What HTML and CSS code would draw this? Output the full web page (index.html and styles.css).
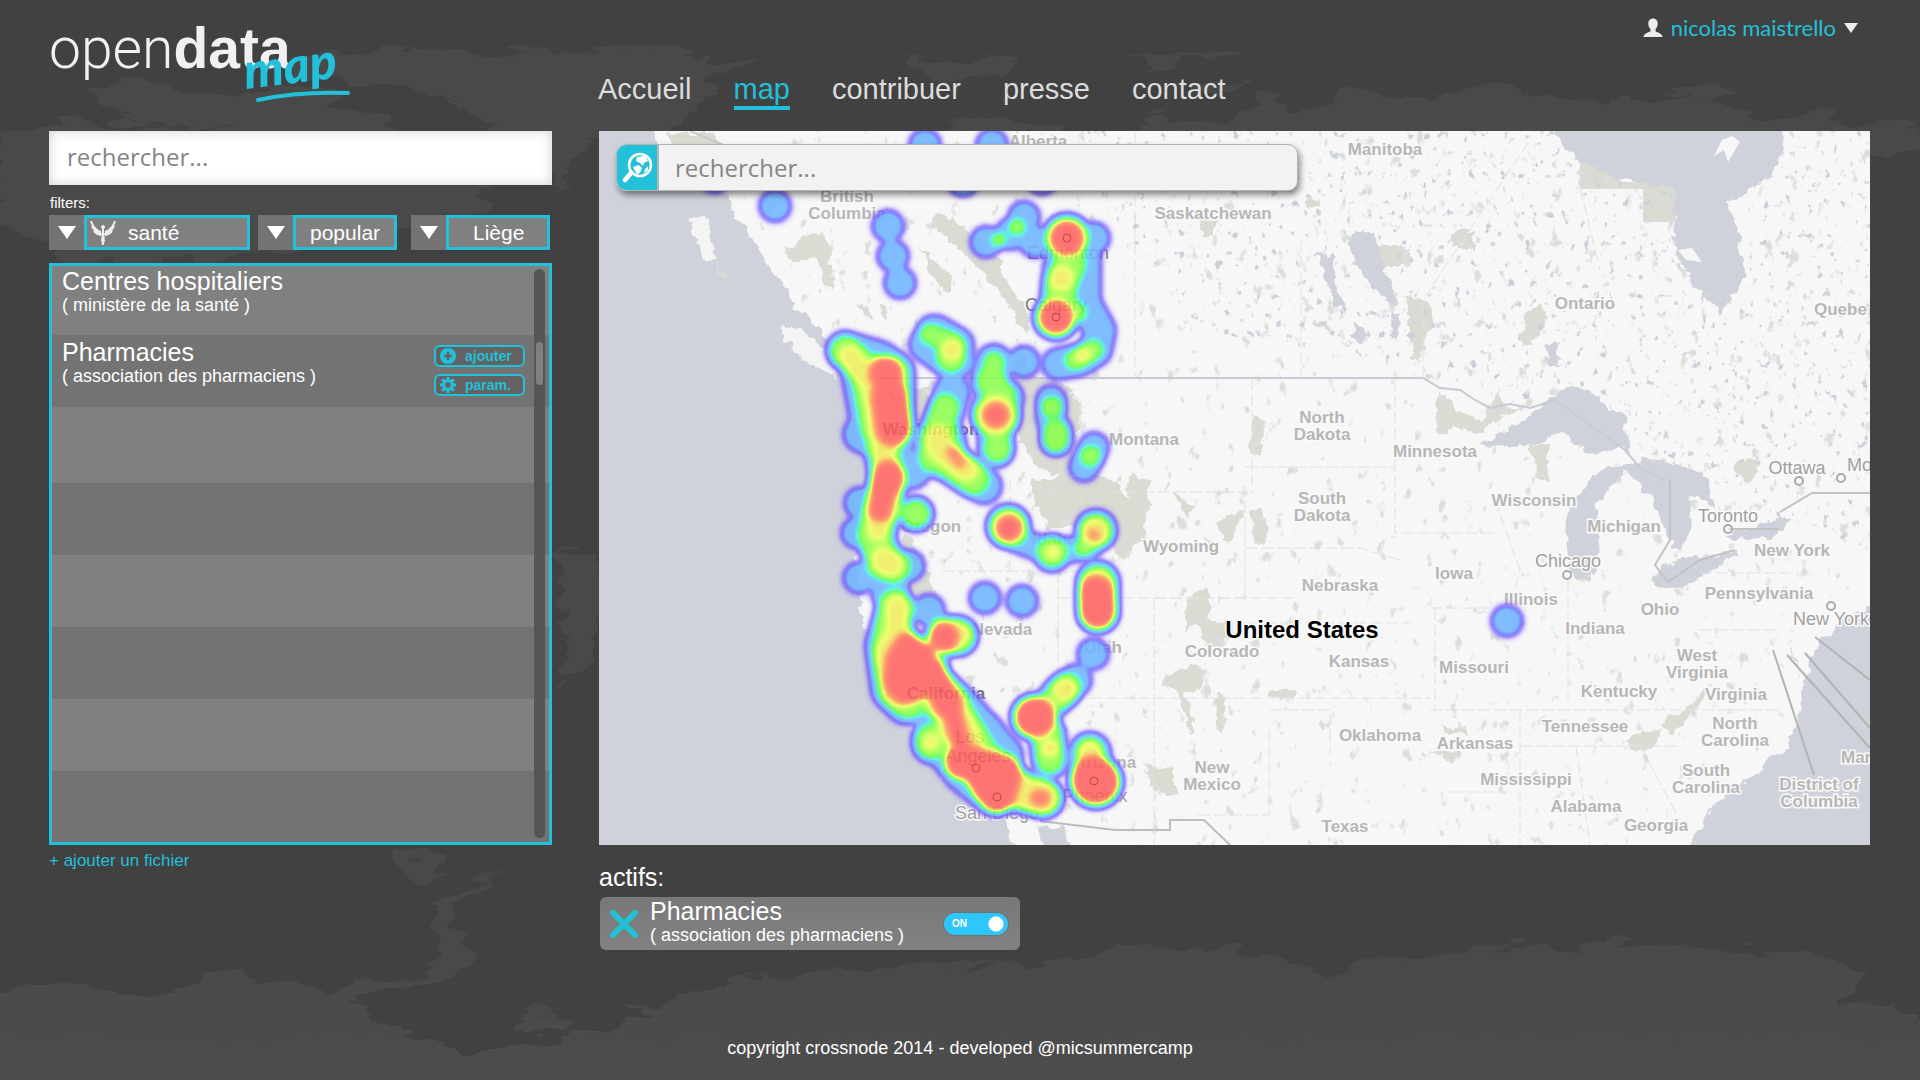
FILE: index.html
```html
<!DOCTYPE html>
<html lang="fr">
<head>
<meta charset="utf-8">
<title>opendata map</title>
<link rel="stylesheet" href="styles.css">
</head>
<body>
<svg class="backdrop" viewBox="0 0 1920 1080" preserveAspectRatio="xMidYMid slice" aria-hidden="true">
  <defs>
    <filter id="rough" x="0" y="0" width="1" height="1">
      <feTurbulence type="fractalNoise" baseFrequency="0.02 0.06" numOctaves="4" seed="4" result="n"/>
      <feDisplacementMap in="SourceGraphic" in2="n" scale="34" xChannelSelector="R" yChannelSelector="G"/>
    </filter>
    <linearGradient id="south" x1="0" y1="0" x2="0" y2="1"><stop offset="0" stop-color="#474747"/><stop offset="1" stop-color="#4e4e4e"/></linearGradient>
  </defs>
  <rect width="1920" height="1080" fill="#414141"/>
  <g filter="url(#rough)" fill="#484848">
    <path d="M290 62L400 48L520 52L640 46L700 58L765 55L715 75L700 105L660 135L590 145L560 185L520 165L470 105L400 87L310 83Z"/>
    <path d="M90 97L140 80L210 93L280 83L330 100L380 115L440 155L400 140L330 135L270 145L200 130L130 120Z"/>
    <path d="M0 130L80 118L180 130L330 150L480 180L500 205L400 225L300 250L90 270L40 240L0 225Z"/>
    <path d="M905 65L970 57L1020 63L1000 77L940 83ZM1130 60L1240 53L1230 61L1150 67ZM1190 85L1255 79L1230 97Z"/>
    <path d="M930 135L970 117L1050 123L1090 140ZM1150 115L1210 125L1260 101L1300 110L1350 89L1430 95L1510 81L1610 105L1700 95L1750 117L1810 117L1930 130L1930 155L1130 155Z"/>
    <path d="M1660 89L1720 87L1745 91L1710 97Z"/>
    <path d="M560 548L598 560L604 600L586 670L560 685ZM388 850L438 850L438 873L450 879L428 885L403 873Z"/>
  </g>
  <g filter="url(#rough)" fill="url(#south)">
    <path d="M-20 990L70 985L160 992L230 976L330 986L425 975L440 945L430 905L470 880L505 868L450 910L470 945L465 970L420 990L350 1000L380 1024L470 1052L560 1036L660 1018L630 1010L680 996L770 972L900 966L1080 960L1150 944L1230 950L1330 970L1480 948L1640 944L1800 954L1870 975L1840 1000L1940 1020L1940 1100L-20 1100Z"/>
    <path d="M515 1025L540 1010L570 1016L565 1030Z"/>
  </g>
</svg>

<header class="top">
  <a class="logo" href="#" aria-label="opendata map"><span class="logo-open">open</span><span class="logo-data">data</span>
    <svg class="logo-map" viewBox="0 0 120 60" aria-hidden="true">
      <text class="logo-script" x="6" y="43" transform="rotate(-7 6 43)">map</text>
      <path d="M18 54C50 47 78 46 108 47" fill="none" stroke="#22c0d9" stroke-width="4" stroke-linecap="round"/>
    </svg>
  </a>
  <nav class="menu">
    <a href="#">Accueil</a>
    <a href="#" class="current" aria-current="page">map</a>
    <a href="#">contribuer</a>
    <a href="#">presse</a>
    <a href="#">contact</a>
  </nav>
  <button class="user" type="button">
    <svg width="20" height="20" viewBox="0 0 20 20"><path fill="#eee" d="M10 0.500C6.800 0.500 5.200 2.800 5.300 5.800C5.400 8.300 6.200 9.800 7.400 11V13.200C6.500 14.300 1 14.800 0.400 19H19.600C19 14.800 13.500 14.300 12.600 13.200V11C13.800 9.800 14.600 8.300 14.700 5.800C14.800 2.800 13.200 0.500 10 0.500Z"/></svg>
    <span>nicolas maistrello</span>
    <svg width="14" height="10" viewBox="0 0 14 10"><path fill="#eee" d="M0 0H14L7 10Z"/></svg>
  </button>
</header>

<main class="board">
  <section class="side">
    <input class="search" type="search" placeholder="rechercher..." aria-label="rechercher un jeu de données">
    <h2 class="filters-title">filters:</h2>
    <div class="filters">
      <label class="filter wide">
        <span class="arrow"><svg width="18" height="13" viewBox="0 0 18 13"><path fill="#fff" d="M0 0H18L9 13Z"/></svg></span>
        <svg class="caduceus" width="26" height="26" viewBox="0 0 26 26" fill="none" stroke="#eee"><path d="M13 6V25" stroke-width="2"/><circle cx="13" cy="7" r="1.500" fill="#eee"/><path d="M11 12C8 11 3 8 1 1M11 13.500C8 13 4 11 2 6M11 15C8 15 6 13.500 4 11M15 12C18 11 23 8 25 1M15 13.500C18 13 22 11 24 6M15 15C18 15 20 13.500 22 11" stroke-width="2"/><path d="M13 13C9 15 17 17 13 19S15.500 22 13 24M13 13C17 15 9 17 13 19S10.500 22 13 24" stroke-width="1.600"/></svg>
        <select aria-label="catégorie"><option>santé</option></select>
      </label>
      <label class="filter">
        <span class="arrow"><svg width="18" height="13" viewBox="0 0 18 13"><path fill="#fff" d="M0 0H18L9 13Z"/></svg></span>
        <select aria-label="tri"><option>popular</option></select>
      </label>
      <label class="filter last">
        <span class="arrow"><svg width="18" height="13" viewBox="0 0 18 13"><path fill="#fff" d="M0 0H18L9 13Z"/></svg></span>
        <select aria-label="ville"><option>Liège</option></select>
      </label>
    </div>
    <div class="list">
      <ul>
        <li class="first"><div><h3>Centres hospitaliers</h3><p>( ministère de la santé )</p></div></li>
        <li><div><h3>Pharmacies</h3><p>( association des pharmaciens )</p></div>
          <div class="actions">
            <button type="button"><svg width="16" height="16" viewBox="0 0 16 16"><circle cx="8" cy="8" r="8" fill="#22c0d9"/><path d="M8 4V12M4 8H12" stroke="#636363" stroke-width="2.400"/></svg>ajouter</button>
            <button type="button"><svg width="16" height="16" viewBox="0 0 16 16"><circle cx="8" cy="8" r="4.400" fill="none" stroke="#22c0d9" stroke-width="3.200"/><path d="M8 0V3M8 13V16M0 8H3M13 8H16M2.300 2.300L4.500 4.500M11.500 11.500L13.700 13.700M13.700 2.300L11.500 4.500M4.500 11.500L2.300 13.700" stroke="#22c0d9" stroke-width="3"/></svg>param.</button>
          </div>
        </li>
        <li class="tall"></li><li></li><li></li><li></li><li></li><li class="rest"></li>
      </ul>
      <div class="track"><div class="thumb"></div></div>
    </div>
  </section>

  <section class="map" aria-label="carte">
    <svg class="map-canvas" viewBox="599 131 1271 714" preserveAspectRatio="xMidYMid slice">
      <defs>
        <filter id="coast" x="-5%" y="-5%" width="110%" height="110%">
          <feTurbulence type="fractalNoise" baseFrequency="0.090" numOctaves="3" seed="2" result="n"/>
          <feDisplacementMap in="SourceGraphic" in2="n" scale="12" xChannelSelector="R" yChannelSelector="G"/>
        </filter>
        <filter id="lakes" x="0" y="0" width="1" height="1" color-interpolation-filters="sRGB">
          <feTurbulence type="fractalNoise" baseFrequency="0.130 0.100" numOctaves="4" seed="11"/>
          <feColorMatrix values="0 0 0 0 0.790  0 0 0 0 0.810  0 0 0 0 0.850  8 0 0 0 -5.300"/>
          <feComposite in2="SourceAlpha" operator="in"/>
        </filter>
        <filter id="streams" x="0" y="0" width="1" height="1" color-interpolation-filters="sRGB">
          <feTurbulence type="fractalNoise" baseFrequency="0.080 0.060" numOctaves="3" seed="29"/>
          <feColorMatrix values="0 0 0 0 0.860  0 0 0 0 0.870  0 0 0 0 0.860  8 0 0 0 -5.300"/>
          <feComposite in2="SourceAlpha" operator="in"/>
        </filter>
        <filter id="heat" filterUnits="userSpaceOnUse" x="599" y="131" width="1271" height="714" color-interpolation-filters="sRGB">
          <feGaussianBlur stdDeviation="3.800"/>
          <feColorMatrix values="0 0 0 1 0  0 0 0 1 0  0 0 0 1 0  0 0 0 1 0"/>
          <feComponentTransfer>
            <feFuncR type="table" tableValues="0.500 0.440 0.400 0.440 0.440 0.280 0.360 0.620 0.930 1 1"/>
            <feFuncG type="table" tableValues="0.400 0.310 0.400 0.700 0.720 0.950 1 1 1 0.560 0.360"/>
            <feFuncB type="table" tableValues="1 1 1 1 1 0.900 0.300 0.280 0.340 0.330 0.360"/>
            <feFuncA type="table" tableValues="0 0.600 0.820 0.900 0.880 0.850 0.850 0.850 0.850 0.850 0.850"/>
          </feComponentTransfer>
        </filter>
      </defs>
      <rect x="599" y="131" width="1271" height="714" fill="#cfd2db"/>
      <path filter="url(#coast)" fill="#f7f7f7" d="M650 120L660 150L700 185L728 195L735 218L750 232L762 255L778 278L790 292L794 308L812 322L828 338L838 365L850 385L851 395L860 432L867 455L866 490L857 530L857 560L862 590L860 612L864 626L874 640L880 670L884 692L900 712L918 740L930 757L947 780L967 797L992 812L1006 822L1014 845L1024 860L1046 860L1040 824L1062 828L1078 860H1690L1692 840L1704 817L1724 797L1748 777L1768 762L1788 746L1798 722L1803 690L1810 665L1817 642L1832 634L1842 618L1885 604V120Z"/>
      <g filter="url(#coast)" fill="#f4f4f4">
        <path d="M688 217L708 218L712 240L718 262L707 262L698 245Z"/>
        <path d="M779 325L800 328L826 352L838 378L815 368L792 348Z"/>
        <path fill="#dadcd4" d="M716 262L728 280L722 278ZM665 133L715 133L722 180L690 172Z"/>
      </g>
      <g filter="url(#coast)" fill="#dadcd4">
        <path d="M787 250L805 236L822 232L830 245L834 290L826 288L816 255L800 262L788 262Z"/>
        <path d="M930 222L942 214L962 225L985 250L1000 262L1012 290L1028 310L1030 335L1018 325L1008 300L990 282L960 250Z"/>
        <path d="M918 245L930 258L950 275L950 290L940 290L928 265ZM858 302L872 308L874 322L862 316ZM878 306L886 306L884 320Z"/>
        <path d="M1018 345L1030 375L1062 380L1082 405L1076 440L1070 480L1040 470L1020 440L1012 400Z"/>
        <path d="M1030 480L1100 475L1128 495L1140 540L1122 560L1095 520L1050 530L1036 505ZM900 382L930 390L925 440L905 430Z"/>
        <path d="M905 530L920 560L938 600L930 610L905 585ZM1128 475L1150 480L1145 540L1132 535Z"/>
        <path d="M1218 520L1245 510L1230 545L1222 540ZM1250 508L1262 512L1270 530L1262 548L1254 542ZM1175 492L1192 510L1190 520L1178 505Z"/>
        <path d="M1185 600L1206 588L1212 620L1228 625L1222 650L1206 645L1196 625L1186 630ZM1160 680L1192 665L1205 670L1200 690L1185 692L1195 730L1190 735L1182 698ZM1145 765L1172 770L1178 795L1155 790ZM1215 690L1226 700L1222 735L1216 725Z"/>
        <path d="M1370 246H1410V266H1378ZM1405 295L1425 300L1435 318L1428 330L1420 360L1412 355ZM1452 232L1475 232L1474 248L1455 246Z"/>
        <path d="M1530 310L1540 302L1548 318L1530 345L1518 342ZM1438 392L1450 400L1456 412L1480 420L1500 388L1502 405L1520 410L1490 425L1480 435L1455 425L1448 438L1435 430Z"/>
        <path d="M1252 415L1266 420L1260 455L1250 453ZM1310 320L1330 322L1335 332ZM1528 446L1550 444L1548 480L1540 480Z"/>
        <path d="M1625 745L1640 732L1660 730L1655 748L1635 752ZM1660 724L1690 704L1713 682L1700 705L1670 735ZM1430 750L1462 752L1450 760ZM1442 725L1465 728L1468 734L1446 733Z"/>
        <path d="M1270 690L1296 692L1296 700L1270 698ZM1734 460L1762 462L1750 482L1736 474ZM1200 220H1214V236H1202ZM1306 197L1325 202L1308 208Z"/>
      </g>
      <path fill="#dadcd4" d="M1580 158L1610 172L1622 182H1676V222H1643V189H1580Z"/>
      <path filter="url(#lakes)" d="M1060 131H1560L1670 190L1720 320L1770 190L1800 131H1870V560L1640 450L1440 375L1200 330L1130 240Z"/>
      <path filter="url(#streams)" d="M1025 131H1870V590L1800 650L1780 740L1680 845H1080L900 700L870 420L740 200L800 131Z"/>
      <g filter="url(#coast)" fill="#cfd2db">
        <path d="M1548 120L1562 145L1577 158L1602 171L1622 181L1652 186L1676 186L1674 218L1676 255L1692 282L1707 299L1720 316L1732 297L1740 292L1745 277L1738 232L1730 212L1727 202L1748 192L1768 177L1781 157L1786 120Z"/>
        <path d="M1347 242L1357 230L1374 234L1382 257L1390 282L1399 305L1388 302L1372 287L1357 267ZM1318 250L1332 258L1336 285L1347 312L1338 308L1326 285ZM1355 322L1368 335L1364 344L1354 338ZM1396 305L1401 325L1394 342L1389 335Z"/>
        <path d="M1480 447L1502 431L1528 417L1548 402L1560 387L1582 387L1599 397L1607 410L1624 414L1627 437L1631 453L1617 447L1602 450L1587 453L1572 442L1564 432L1554 434L1540 444L1512 446ZM1545 345L1556 342L1560 365L1550 368Z"/>
        <path d="M1567 548L1565 522L1572 502L1587 482L1607 467L1629 467L1612 484L1602 494L1597 512L1599 545L1594 570L1588 580L1575 580Z"/>
        <path d="M1622 465L1652 460L1692 467L1707 482L1714 508L1700 497L1687 492L1693 520L1686 545L1672 547L1662 522L1652 500Z"/>
        <path d="M1652 580L1662 567L1682 557L1702 557L1735 550L1738 555L1712 570L1687 585L1667 589ZM1724 535L1742 530L1767 522L1790 516L1787 530L1767 537L1737 540Z"/>
        <path d="M1787 637L1794 660L1800 685L1796 660ZM1640 458L1660 462L1680 470L1650 470Z"/>
      </g>
      <path fill="#f7f7f7" d="M1714 156L1722 140L1732 136L1740 142L1734 152L1728 162L1724 150ZM1678 250L1692 248L1702 262L1686 260ZM1838 610L1870 598V603L1845 614Z"/>
      <g fill="none" stroke="#c8cad4" stroke-width="2">
        <path d="M882 378H1423L1440 388L1460 390L1475 400L1490 408L1510 404L1530 408L1555 400L1625 450L1640 468L1665 480"/>
        <path d="M1040 821L1115 830H1170V820H1204L1230 845" stroke="#bcbcc4"/>
        <path d="M1780 512L1812 493H1870M1728 529H1778M1670 480V540L1655 565L1668 582L1700 560L1735 550" stroke="#c2c2c2"/>
        <path d="M1773 650L1814 775M1787 655L1870 748M1805 653L1870 728M1815 637L1870 680" stroke="#b4b2b2"/>
        <path d="M690 131L740 152" stroke="#c9c9c9"/>
      </g>
      <g fill="none" stroke="#dfe1e1" stroke-width="1" stroke-dasharray="12 4">
        <path d="M1135 131V378M1301 240V378M1423 378V300L1530 140M1580 188L1600 270"/>
        <path d="M1252 378V493M1110 492H1245V598H1060M1245 467H1395M1395 380V533H1495M942 571H1110M1058 571V698M1058 698H1430M1154 598V845M1010 480V571M1245 548H1360L1400 560M1154 598H1300M1290 623H1410M1200 623H1290M1430 608H1500M1495 500L1520 570L1510 610M1568 580V700M1435 608V710M1270 710H1330V755M1269 730V815H1195M1430 710H1780M1520 746H1680M1520 710V845M1450 792H1500M1700 573H1790M1700 630H1780M1576 746L1590 845M1640 746L1680 820"/>
      </g>
      <g class="states">
        <text x="1038" y="147">Alberta</text><text x="1385" y="155">Manitoba</text>
        <text x="847" y="202">British</text><text x="847" y="219">Columbia</text><text x="1213" y="219">Saskatchewan</text>
        <text x="1585" y="309">Ontario</text><text class="cut" x="1814" y="315">Quebe</text>
        <text class="shaded" x="931" y="435">Washington</text><text x="1144" y="445">Montana</text>
        <text x="1322" y="423">North</text><text x="1322" y="440">Dakota</text><text x="1435" y="457">Minnesota</text>
        <text x="1322" y="504">South</text><text x="1322" y="521">Dakota</text><text x="1534" y="506">Wisconsin</text>
        <text x="1624" y="532">Michigan</text><text x="1792" y="556">New York</text><text x="1181" y="552">Wyoming</text>
        <text x="931" y="532">Oregon</text><text x="1055" y="545">Idaho</text><text x="1454" y="579">Iowa</text>
        <text x="1340" y="591">Nebraska</text><text x="1531" y="605">Illinois</text><text x="1759" y="599">Pennsylvania</text>
        <text x="1660" y="615">Ohio</text><text x="1595" y="634">Indiana</text><text x="1002" y="635">Nevada</text><text x="1103" y="653">Utah</text>
        <text x="1222" y="657">Colorado</text><text x="1359" y="667">Kansas</text><text x="1474" y="673">Missouri</text>
        <text x="1697" y="661">West</text><text x="1697" y="678">Virginia</text><text x="1619" y="697">Kentucky</text><text x="1736" y="700">Virginia</text>
        <text class="shaded" x="946" y="699">California</text><text x="1585" y="732">Tennessee</text><text x="1735" y="729">North</text><text x="1735" y="746">Carolina</text>
        <text x="1380" y="741">Oklahoma</text><text x="1475" y="749">Arkansas</text><text x="1212" y="773">New</text><text x="1212" y="790">Mexico</text>
        <text x="1526" y="785">Mississippi</text><text x="1706" y="776">South</text><text x="1706" y="793">Carolina</text>
        <text class="cut" x="1841" y="763">Mar</text><text x="1819" y="790">District of</text><text x="1819" y="807">Columbia</text>
        <text x="1586" y="812">Alabama</text><text x="1656" y="831">Georgia</text><text x="1345" y="832">Texas</text><text x="1105" y="768">Arizona</text>
      </g>
      <g class="cities">
        <text class="shaded" x="1068" y="259">Edmonton</text><text class="shaded" x="1056" y="311">Calgary</text><text x="1797" y="474">Ottawa</text><text class="cut" x="1847" y="471">Mo</text>
        <text x="1728" y="522">Toronto</text><text x="1568" y="567">Chicago</text><text x="1831" y="625">New York</text>
        <text class="shaded" x="970" y="743">Los</text><text class="shaded" x="978" y="762">Angeles</text><text x="997" y="819">San Diego</text><text x="1095" y="802">Phoenix</text>
      </g>
      <text class="country" x="1302" y="638">United States</text>
      <g filter="url(#heat)" fill="#fff" stroke="#fff" stroke-linecap="round" stroke-linejoin="round" stroke-width="0">
        <g opacity="0.370">
          <circle cx="925" cy="145" r="15"/><circle cx="992" cy="145" r="15"/><circle cx="775" cy="206" r="15"/><circle cx="963" cy="181" r="15"/><circle cx="1042" cy="179" r="15"/><circle cx="715" cy="177" r="15"/>
          <circle cx="888" cy="226" r="15"/><circle cx="893" cy="256" r="15"/><circle cx="900" cy="283" r="15"/>
          <circle cx="1024" cy="217" r="15"/><circle cx="1011" cy="234" r="15"/><circle cx="986" cy="242" r="15"/><circle cx="1035" cy="242" r="15"/><circle cx="1094" cy="238" r="15"/>
          <circle cx="1067" cy="238" r="24"/><circle cx="1056" cy="317" r="22"/>
          <path fill="none" stroke-width="30" d="M1085 255V303L1100 330L1096 350L1080 360L1058 364"/>
          <path fill="none" stroke-width="36" d="M1066 250L1061 278L1058 315"/>
          <circle cx="1024" cy="362" r="15"/><circle cx="1507" cy="621" r="15"/>
          <path fill="none" stroke-width="30" d="M933 331L925 345M936 331L958 344V362L948 362L925 345"/>
          <path fill="none" stroke-width="34" d="M994 362L990 385L1006 398M996 415V450M952 392L940 430L936 452L984 486"/>
          <circle cx="996" cy="415" r="24"/>
          <path fill="none" stroke-width="28" d="M1051 400V418M1056 430V440M1094 447L1084 467"/>
          <path fill="none" stroke-width="36" d="M845 350L880 360L896 372V430L888 480L876 540L888 565M890 585V592M862 434L880 440M912 470H895"/>
          <path fill="none" stroke-width="58" d="M872 375L882 430"/>
          <circle cx="860" cy="503" r="15"/><circle cx="857" cy="533" r="15"/><circle cx="859" cy="578" r="15"/><circle cx="909" cy="566" r="15"/><circle cx="916" cy="514" r="17"/>
          <circle cx="1008" cy="526" r="21"/><circle cx="1096" cy="530" r="20"/>
          <path fill="none" stroke-width="24" d="M1018 540L1052 553L1090 546"/>
          <circle cx="1052" cy="553" r="18"/>
          <path fill="none" stroke-width="40" d="M1098 584L1098 612"/>
          <circle cx="985" cy="598" r="15"/><circle cx="1022" cy="601" r="15"/><circle cx="929" cy="610" r="15"/><circle cx="1093" cy="654" r="15"/><circle cx="988" cy="730" r="15"/><circle cx="1076" cy="680" r="15"/>
          <path fill="none" stroke-width="36" d="M896 608L884 645L890 690L905 705L950 705L980 755L990 790L1044 798M932 742V745M946 636L958 636M930 650V680L960 705L1004 755"/>
          <path fill="none" stroke-width="32" d="M930 735L962 775L990 797"/>
          <circle cx="1033" cy="717" r="22"/>
          <path fill="none" stroke-width="32" d="M1038 716L1066 688M1046 730L1050 762"/>
          <path fill="none" stroke-width="40" d="M1090 753L1094 782"/><circle cx="1096" cy="782" r="26"/>
        </g>
        <g opacity="0.470">
          <circle cx="1017" cy="227" r="9"/><circle cx="999" cy="240" r="8"/><circle cx="916" cy="514" r="15"/>
          <circle cx="1067" cy="238" r="22"/><circle cx="1056" cy="317" r="21"/>
          <path fill="none" stroke-width="32" d="M1068 245L1070 265L1061 285L1060 310"/>
          <path fill="none" stroke-width="22" d="M1060 312L1076 312M1075 360L1093 350M930 334L950 342M994 362L990 385L1006 394"/>
          <path fill="none" stroke-width="30" d="M951 346V358M945 408L938 425M990 380L994 384M996 416V418M1056 434V440"/>
          <path fill="none" stroke-width="48" d="M940 440L942 454"/>
          <path fill="none" stroke-width="36" d="M945 460L972 478"/>
          <circle cx="998" cy="448" r="15"/><circle cx="996" cy="415" r="24"/>
          <path fill="none" stroke-width="22" d="M1051 407H1053M1090 456H1091"/>
          <path fill="none" stroke-width="34" d="M846 352L870 375M892 372V425L882 448L888 480L874 535L882 562L894 566"/>
          <path fill="none" stroke-width="52" d="M878 380L886 425"/>
          <circle cx="1009" cy="527" r="20"/><circle cx="1096" cy="531" r="18"/><circle cx="1052" cy="552" r="16"/><circle cx="1084" cy="548" r="10"/>
          <path fill="none" stroke-width="38" d="M896 608L890 650L896 690L908 700M905 650L925 690L950 705L980 755L1000 775L1020 790L1044 798M946 636L958 636"/>
          <circle cx="931" cy="742" r="18"/>
          <path fill="none" stroke-width="40" d="M1098 582V612"/>
          <path fill="none" stroke-width="32" d="M1060 694L1066 688M1048 735L1050 758M1090 752V780"/>
          <circle cx="1035" cy="717" r="22"/><circle cx="1096" cy="781" r="25"/>
        </g>
        <g opacity="0.450">
          <circle cx="1067" cy="238" r="20"/><circle cx="1061" cy="278" r="14"/><circle cx="1056" cy="317" r="19"/><circle cx="952" cy="350" r="12"/><circle cx="1083" cy="355" r="9"/><circle cx="996" cy="415" r="20"/>
          <path fill="none" stroke-width="24" d="M850 356L872 385L884 440L884 480L878 530"/>
          <path fill="none" stroke-width="42" d="M884 376L888 430"/>
          <path fill="none" stroke-width="36" d="M889 478L882 510"/>
          <path fill="none" stroke-width="28" d="M884 560L890 564M938 438L940 448L966 468"/>
          <circle cx="1009" cy="528" r="18"/><circle cx="1095" cy="532" r="15"/><circle cx="1053" cy="552" r="8"/>
          <path fill="none" stroke-width="37" d="M1097 588V612M900 640L892 655L900 690M945 705L965 740M980 770L1000 780L1040 798M905 650L950 700"/>
          <path fill="none" stroke-width="24" d="M897 606V640"/>
          <circle cx="1036" cy="717" r="22"/><circle cx="1065" cy="690" r="13"/><circle cx="1050" cy="748" r="10"/><circle cx="1095" cy="781" r="25"/><circle cx="1090" cy="752" r="12"/><circle cx="931" cy="742" r="9"/><circle cx="946" cy="636" r="19"/><circle cx="962" cy="634" r="10"/>
        </g>
        <g fill="none">
          <path stroke-width="33" d="M1067 238H1067.100M1056 317H1056.100M886 374H886.100"/>
          <path stroke-width="36" d="M890 397L894 428"/>
          <path stroke-width="36" d="M1096 594L1098 610"/>
          <path stroke-width="32" d="M889 477L885 484"/>
          <path stroke-width="22" d="M884 486L880 510"/>
          <path stroke-width="24" d="M996 415H996.100M1009 528H1009.100"/>
          <path stroke-width="28" d="M944 637H944.100M908 647L922 657M930 668L948 704"/>
          <path stroke-width="48" d="M910 662L908 680"/>
          <path stroke-width="18" d="M952 712L962 748"/>
          <path stroke-width="36" d="M962 762L1004 772M978 768L990 788M970 764L1002 780L997 796"/>
          <path stroke-width="40" d="M1035 717H1035.100"/>
          <path stroke-width="46" d="M1093 779L1097 782"/>
          <path stroke-width="15" d="M1038 798H1042" opacity="0.800"/>
          <path stroke-width="12" d="M952 452L960 462M1094 535H1094.100" opacity="0.600"/>
        </g>
      </g>
      <g fill="#fff" fill-opacity="0.500" stroke="#a9a9a9" stroke-width="2">
        <circle cx="1799" cy="481" r="4"/><circle cx="1841" cy="478" r="4"/><circle cx="1728" cy="529" r="4"/><circle cx="1567" cy="575" r="4"/><circle cx="1831" cy="606" r="4"/>
      </g>
      <g fill="none" stroke="#c24848" stroke-width="1">
        <circle cx="976" cy="768" r="4"/><circle cx="997" cy="797" r="4"/><circle cx="1094" cy="781" r="4"/><circle cx="1067" cy="238" r="4"/><circle cx="1056" cy="317" r="4"/>
      </g>
    </svg>
    <form class="map-search">
      <button type="button" aria-label="rechercher">
        <svg width="32" height="32" viewBox="0 0 32 32"><circle cx="19" cy="13" r="11" fill="none" stroke="#fff" stroke-width="2.600"/><path d="M10 21L4 28" stroke="#fff" stroke-width="4.600" stroke-linecap="round"/><path fill="#fff" d="M16 5L24 4L27 9L23 11L22 14L19 11L15 9ZM12 15L18 13L21 16L19 21L16 22L14 19ZM27 14L24 17L23 21L27 18Z"/></svg>
      </button>
      <input type="text" placeholder="rechercher..." aria-label="rechercher sur la carte">
    </form>
  </section>

  <a class="add-file" href="#">+ ajouter un fichier</a>

  <section class="active">
    <h2>actifs:</h2>
    <div class="card">
      <button class="close" type="button" aria-label="retirer"><svg width="30" height="30" viewBox="0 0 30 30"><path d="M4 4L26 26M26 4L4 26" stroke="#22c0d9" stroke-width="6" stroke-linecap="round"/></svg></button>
      <div class="card-text"><h3>Pharmacies</h3><p>( association des pharmaciens )</p></div>
      <label class="toggle"><input type="checkbox" checked aria-label="afficher Pharmacies"><span>ON</span></label>
    </div>
  </section>
</main>

<footer class="foot">copyright crossnode 2014 - developed @micsummercamp</footer>
</body>
</html>
```
FILE: styles.css
```css
* { box-sizing: border-box; }

body {
  margin: 0;
  min-height: 100vh;
  display: flex;
  flex-direction: column;
  position: relative;
  overflow-x: hidden;
  background: #414141;
  color: #fff;
  font-family: "Liberation Sans", Arial, sans-serif;
}

h2, h3, p, ul { margin: 0; padding: 0; font-weight: 400; }
ul { list-style: none; }
a { color: inherit; text-decoration: none; }
button { background: none; border: 0; padding: 0; font: inherit; color: inherit; cursor: pointer; }
svg { flex: none; display: block; }

.backdrop { position: absolute; inset: 0; width: 100%; height: 100%; z-index: -1; }

/* header */
.top {
  display: grid;
  grid-template-columns: 502px 1fr auto;
  column-gap: 47px;
  padding: 0 50px 0 49px;
  height: 131px;
}
.logo {
  position: relative;
  justify-self: start;
  padding-top: 20px;
  font-size: 57px;
  line-height: 56px;
  white-space: nowrap;
  color: #f1f1f3;
}
.logo-open { font-family: Roboto, sans-serif; font-weight: 300; }
.logo-data { font-weight: 700; }
.logo-map { position: absolute; left: 191px; top: 46px; width: 120px; height: 60px; overflow: visible; }
.logo-script { font: italic 900 50px Lato, sans-serif; fill: #22c0d9; }

.menu { display: flex; gap: 42px; align-self: end; padding-bottom: 21px; }
.menu a { font-size: 29px; line-height: 32px; padding-bottom: 1px; border-bottom: 4px solid transparent; color: #dcdcdc; }
.menu .current { color: #22c0d9; border-color: #22c0d9; }

.user {
  display: flex;
  align-items: center;
  align-self: start;
  gap: 8px;
  padding: 16px 12px 0 0;
  font: 22px/24px Lato, sans-serif;
  color: #22c0d9;
}

/* main grid */
.board {
  display: grid;
  grid-template-columns: 503px minmax(0, 1fr);
  column-gap: 47px;
  padding: 0 50px 0 49px;
}
.side { display: flex; flex-direction: column; min-height: 0; }

.search {
  height: 54px;
  width: 100%;
  border: 0;
  padding: 0 18px 4px;
  background: #fff;
  box-shadow: inset 0 0 12px #d0d0d0;
  font: 24px/30px "Open Sans", sans-serif;
  color: #777;
}
input::placeholder { color: #858585; opacity: 1; }

.filters-title { margin-top: 9px; padding-left: 1px; font-size: 15px; line-height: 18px; }
.filters { display: flex; justify-content: space-between; margin: 3px 0 13px; padding-right: 2px; }
.filter { display: flex; position: relative; width: 139px; height: 35px; }
.filter.wide { width: 201px; margin-right: -6px; }
.arrow { display: flex; align-items: center; justify-content: center; width: 35px; background: #737373; }
.filter select {
  appearance: none;
  flex: 1;
  min-width: 0;
  border: 3px solid #22c0d9;
  border-radius: 0;
  background: #808080;
  color: #fff;
  font: 21px/28px "Liberation Sans", Arial, sans-serif;
  padding: 0 0 0 14px;
}
.filter.wide select { padding-left: 41px; }
.filter.last select { padding-left: 24px; }
.caduceus { position: absolute; left: 41px; top: 5px; }

/* dataset list */
.list { position: relative; flex: 1; border: 3px solid #22c0d9; display: flex; }
.list ul { flex: 1; display: flex; flex-direction: column; }
.list li {
  height: 72px;
  display: flex;
  justify-content: space-between;
  align-items: flex-start;
  padding: 4px 24px 0 10px;
  background: #737373;
}
.list li:nth-child(odd) { background: #808080; }
.list .first { height: 69px; padding-top: 2px; }
.list .tall { height: 76px; }
.list .rest { flex: 1; }
.list h3, .card h3 { font-size: 25px; line-height: 26px; }
.list p, .card p { font-size: 18px; line-height: 22px; }
.actions { display: flex; flex-direction: column; gap: 7px; padding-top: 6px; }
.actions button {
  display: flex;
  align-items: center;
  gap: 9px;
  width: 91px;
  height: 22px;
  padding: 0 4px;
  border: 2px solid #22c0d9;
  border-radius: 6px;
  background: #636363;
  color: #22c0d9;
  font-size: 14px;
  line-height: 16px;
  font-weight: 700;
}
.track { position: absolute; top: 3px; right: 4px; bottom: 4px; width: 11px; border-radius: 6px; background: #555; }
.thumb { height: 43px; margin: 73px 2px 0; border-radius: 4px; background: #808080; }

/* map */
.map { position: relative; aspect-ratio: 1271 / 714; overflow: hidden; }
.map-canvas { width: 100%; height: 100%; }
.states text, .cities text, .country {
  font-family: "Liberation Sans", Arial, sans-serif;
  text-anchor: middle;
  paint-order: stroke;
  stroke: #fafafa;
  stroke-width: 3px;
}
.states text { font-size: 17px; font-weight: 700; fill: #b6b6b6; }
.cities text { font-size: 18px; fill: #a0a0a0; }
.states .shaded, .cities .shaded { fill: #777; }
.states .cut, .cities .cut { text-anchor: start; }
.country { font-size: 24px; font-weight: 700; fill: #000; }

.map-search {
  position: absolute;
  left: 17px;
  top: 13px;
  width: 682px;
  max-width: 95%;
  height: 47px;
  display: flex;
  border: 1px solid #b4b4b4;
  border-radius: 10px;
  overflow: hidden;
  background: #f2f2f2;
  box-shadow: 2px 4px 6px rgba(0, 0, 0, 0.45);
}
.map-search button { width: 42px; display: flex; align-items: center; justify-content: center; background: #22c0d9; border-right: 2px solid #b4b4b4; }
.map-search input { flex: 1; border: 0; background: none; padding: 0 16px; font: 24px/30px "Open Sans", sans-serif; color: #777; }

/* below the map */
.add-file { justify-self: start; align-self: start; margin-top: 6px; font-size: 17px; line-height: 20px; color: #22c0d9; }
.active { padding-top: 18px; }
.active h2 { font-size: 25px; line-height: 28px; }
.card {
  display: flex;
  align-items: center;
  width: 420px;
  height: 53px;
  margin: 6px 0 0 1px;
  padding: 0 12px 0 9px;
  border-radius: 6px;
  background: linear-gradient(#787878, #828282);
}
.card-text { flex: 1; padding: 0 0 3px 11px; }
.toggle { position: relative; display: flex; }
.toggle input {
  appearance: none;
  margin: 0;
  width: 64px;
  height: 22px;
  border-radius: 11px;
  background: radial-gradient(circle at 52px 11px, #fff 7px, #2ec6fb 8px);
  box-shadow: 0 0 2px #555;
}
.toggle span { position: absolute; left: 8px; top: 0; font-size: 10px; line-height: 22px; font-weight: 700; }

.foot { margin-top: auto; padding: 0 20px 20px; text-align: center; font-size: 18px; line-height: 24px; }
```
